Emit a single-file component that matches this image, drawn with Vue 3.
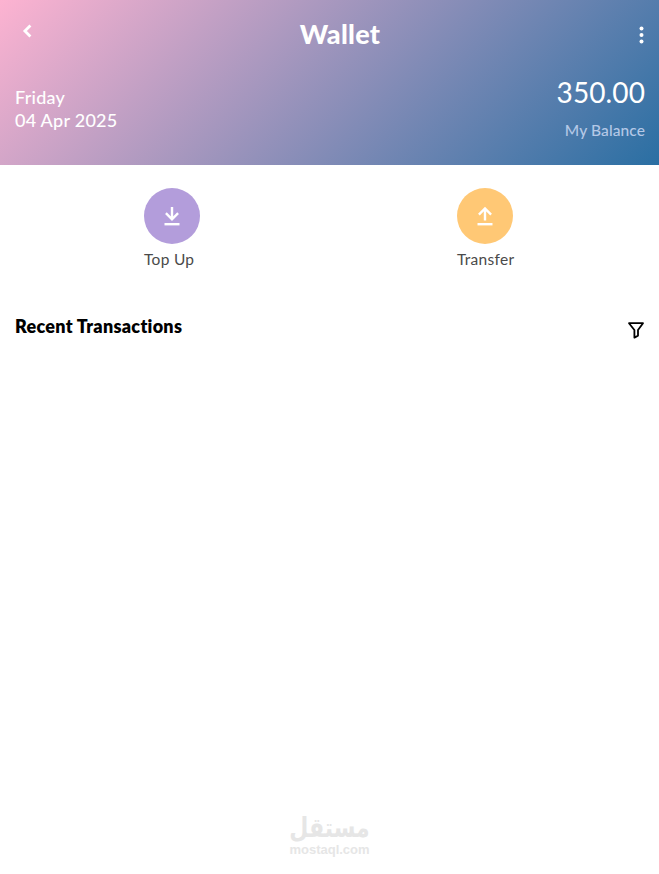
<script setup>
const actions = [
  { label: 'Top Up', color: '#b39ddb', up: false },
  { label: 'Transfer', color: '#ffc875', up: true },
]
</script>

<template>
  <div class="page">
    <header class="hero">
      <div class="top">
        <svg class="back" width="12" height="14" viewBox="0 0 12 14"><path d="M9.4 1.5 3.9 7l5.5 5.5" fill="none" stroke="#fff" stroke-width="2.8"/></svg>
        <h1>Wallet</h1>
        <svg class="dots" width="5" height="18" viewBox="0 0 5 18"><circle cx="2.5" cy="2.5" r="2" fill="#fff"/><circle cx="2.5" cy="9" r="2" fill="#fff"/><circle cx="2.5" cy="15.5" r="2" fill="#fff"/></svg>
      </div>
      <div class="info">
        <div class="date"><div>Friday</div><div>04 Apr 2025</div></div>
        <div class="balance"><div class="amount">350.00</div><div class="cap">My Balance</div></div>
      </div>
    </header>

    <section class="actions">
      <div v-for="a in actions" :key="a.label" class="action">
        <div class="circle" :style="{ background: a.color }">
          <svg width="18" height="20" viewBox="0 0 18 20" fill="none" stroke="#fff" stroke-width="2.4">
            <path d="M1.5 18.2h15" />
            <path v-if="a.up" d="M9 14.5V2.8M2.9 8.6 9 2.5l6.1 6.1" />
            <path v-else d="M9 1V13.2M2.9 7.2 9 13.3l6.1-6.1" />
          </svg>
        </div>
        <span>{{ a.label }}</span>
      </div>
    </section>

    <section class="recent">
      <h2>Recent Transactions</h2>
      <svg class="filter" width="18" height="18" viewBox="0 0 18 18" fill="none" stroke="#000" stroke-width="1.8" stroke-linejoin="round"><path d="M2 2.2h14L11 9v5.6l-3.6 2V9z"/></svg>
    </section>

    <footer class="mark">
      <div class="ar">مستقل</div>
      <div class="en">mostaql.com</div>
    </footer>
  </div>
</template>

<style>
html, body { margin: 0; background: #fff; }
</style>

<style scoped>
.page {
  width: 659px;
  height: 874px;
  display: flex;
  flex-direction: column;
  overflow: hidden;
  background: #fff;
  font-family: Lato, "Open Sans", sans-serif;
}
.hero {
  height: 165px;
  box-sizing: border-box;
  padding: 19px 14px 0 15px;
  background: linear-gradient(135deg, #fdb3d1 0%, #2a6fa3 100%);
  color: #fff;
}
.top { display: flex; justify-content: space-between; align-items: flex-start; height: 50px; }
.back { margin: 5px 0 0 6px; }
.dots { margin: 7px 1px 0 0; }
h1 { margin: 0 0 0 8px; font-size: 27px; line-height: 30px; font-weight: 900; letter-spacing: .3px; }
.info { display: flex; justify-content: space-between; margin-top: 6px; }
.date { padding-top: 11px; font-size: 18px; line-height: 23px; font-weight: 500; letter-spacing: .25px; }
.balance { text-align: right; }
.amount { font-size: 28px; line-height: 34px; letter-spacing: .1px; }
.cap { margin-top: 11px; font-size: 15.5px; line-height: 20px; color: #b4c8e6; font-weight: 500; letter-spacing: .1px; }
.actions { display: flex; gap: 257px; height: 122px; box-sizing: border-box; padding: 23px 0 0 144px; }
.action { width: 56px; display: flex; flex-direction: column; align-items: flex-start; color: #4a4a4a; font-size: 15.5px; letter-spacing: .3px; line-height: 20px; white-space: nowrap; }
.circle { width: 56px; height: 56px; border-radius: 50%; display: flex; align-items: center; justify-content: center; margin-bottom: 5px; }
.recent { display: flex; justify-content: space-between; align-items: flex-start; padding: 0 15px; height: 50px; }
h2 { margin: 27px 0 0; font-size: 18px; line-height: 24px; font-weight: 800; color: #000; letter-spacing: .27px; }
.filter { margin: 34px -1px 0 0; }
.mark { margin-top: auto; margin-bottom: 17px; text-align: center; color: #e6e6e6; font-weight: 700; }
.ar { font-family: "DejaVu Sans", sans-serif; font-size: 22px; line-height: 30px; transform: scaleY(1.25); }
.en { font-family: "Liberation Sans", sans-serif; font-size: 13px; line-height: 14px; }
</style>
